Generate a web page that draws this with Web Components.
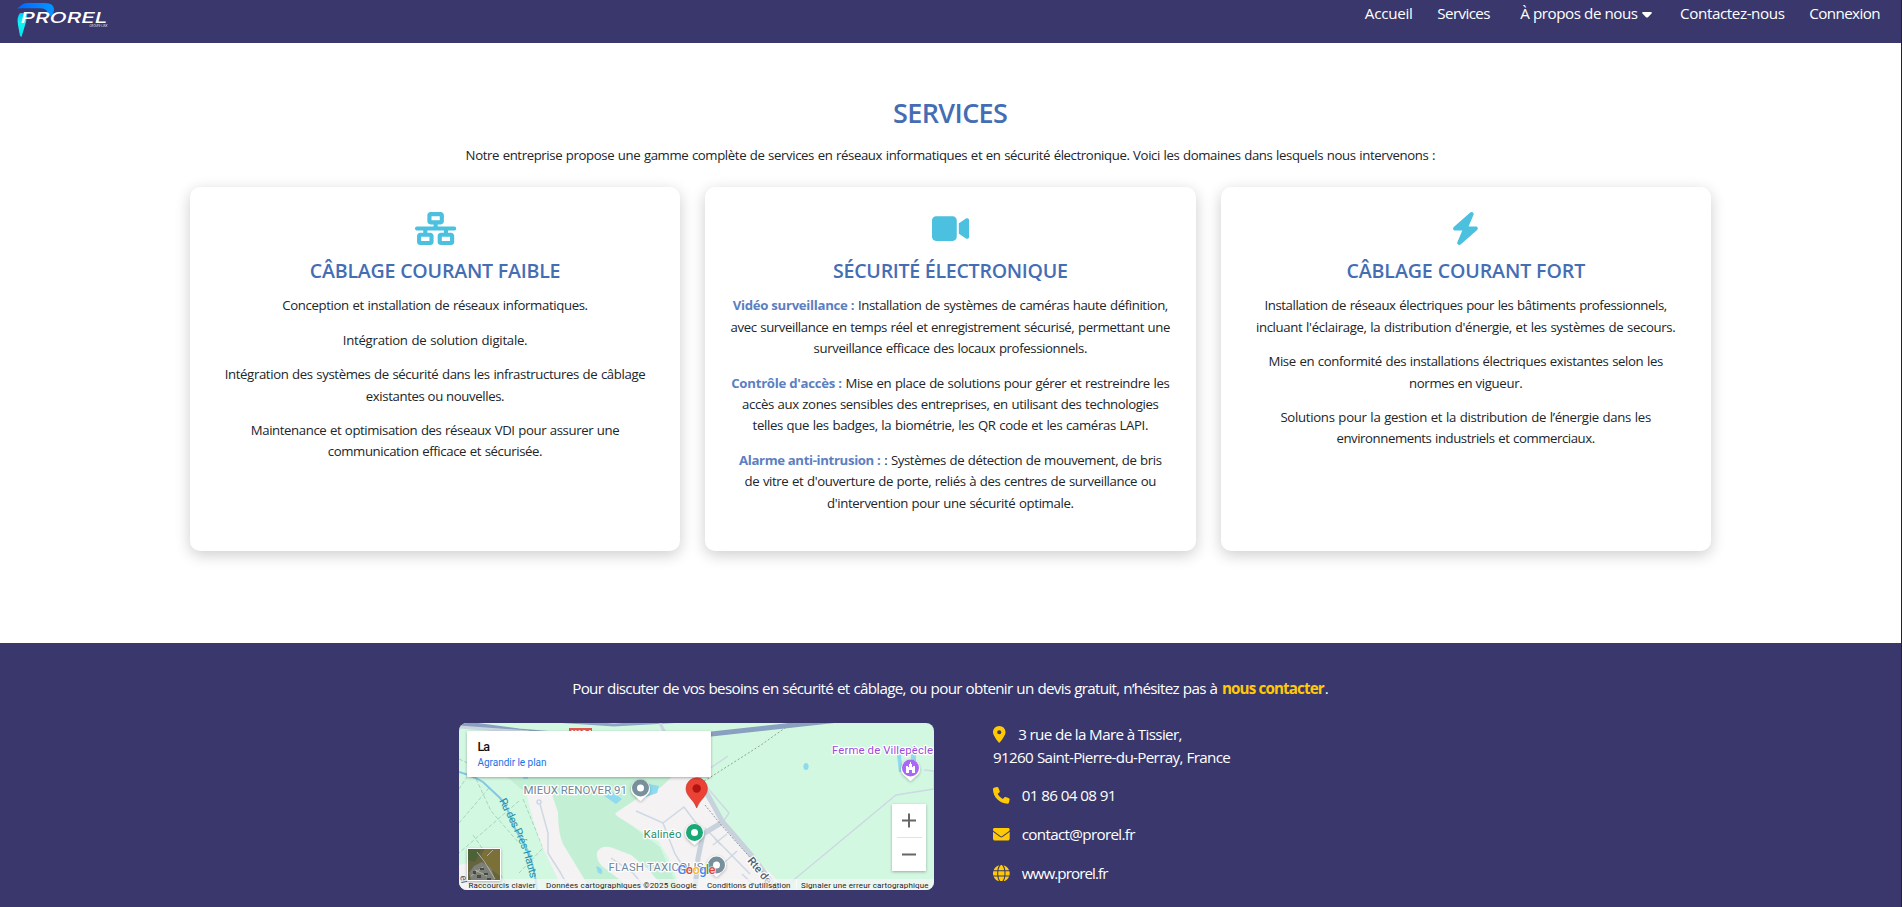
<!DOCTYPE html>
<html lang="fr">
<head>
<meta charset="utf-8">
<title>Prorel - Services</title>
<style>
html,body{margin:0;height:100%;overflow:hidden;background:#fff}
body{box-sizing:border-box;border-right:1px solid #232326;font-family:"Open Sans","Noto Sans",sans-serif;color:#212529}
</style>
</head>
<body>
<prorel-page></prorel-page>
<script>
const ICONS={
network:[640,'M256 64H384v64H256V64zM240 0c-26.5 0-48 21.5-48 48v96c0 26.5 21.5 48 48 48h48v32H32c-17.7 0-32 14.3-32 32s14.3 32 32 32h96v32H80c-26.5 0-48 21.5-48 48v96c0 26.5 21.5 48 48 48H240c26.5 0 48-21.5 48-48V368c0-26.5-21.5-48-48-48H192V288H448v32H400c-26.5 0-48 21.5-48 48v96c0 26.5 21.5 48 48 48H560c26.5 0 48-21.5 48-48V368c0-26.5-21.5-48-48-48H512V288h96c17.7 0 32-14.3 32-32s-14.3-32-32-32H352V192h48c26.5 0 48-21.5 48-48V48c0-26.5-21.5-48-48-48H240zM96 448V384H224v64H96zm320-64H544v64H416V384z'],
video:[576,'M0 128C0 92.7 28.7 64 64 64H320c35.3 0 64 28.7 64 64V384c0 35.3-28.7 64-64 64H64c-35.3 0-64-28.7-64-64V128zM559.1 99.8c10.4 5.6 16.9 16.4 16.9 28.2V384c0 11.8-6.5 22.6-16.9 28.2s-23 5-32.9-1.6l-96-64L416 337.1V320 192 174.9l14.2-9.5 96-64c9.8-6.5 22.4-7.2 32.9-1.6z'],
bolt:[448,'M349.4 44.6c5.9-13.7 1.5-29.7-10.6-38.5s-28.6-8-39.9 1.8l-256 224c-10 8.8-13.6 22.9-8.9 35.3S50.7 288 64 288H175.5L98.6 467.4c-5.9 13.7-1.5 29.7 10.6 38.5s28.6 8 39.9-1.8l256-224c10-8.8 13.6-22.9 8.9-35.3s-16.6-20.7-30-20.7H272.5L349.4 44.6z'],
pin:[384,'M215.7 499.2C267 435 384 279.4 384 192C384 86 298 0 192 0S0 86 0 192c0 87.4 117 243 168.3 307.2c12.3 15.3 35.1 15.3 47.4 0zM192 128a64 64 0 1 1 0 128 64 64 0 1 1 0-128z'],
phone:[512,'M164.9 24.6c-7.7-18.6-28-28.5-47.4-23.2l-88 24C12.1 30.2 0 46 0 64C0 311.4 200.6 512 448 512c18 0 33.8-12.1 38.6-29.5l24-88c5.3-19.4-4.6-39.7-23.2-47.4l-96-40c-16.3-6.8-35.2-2.1-46.3 11.6L304.7 368C234.3 334.7 177.3 277.7 144 207.3L193.3 167c13.7-11.2 18.4-30 11.6-46.3l-40-96z'],
mail:[512,'M48 64C21.5 64 0 85.5 0 112c0 15.1 7.1 29.3 19.2 38.4L236.8 313.6c11.4 8.5 27 8.5 38.4 0L492.8 150.4c12.1-9.1 19.2-23.3 19.2-38.4c0-26.5-21.5-48-48-48H48zM0 176V384c0 35.3 28.7 64 64 64H448c35.3 0 64-28.7 64-64V176L294.4 339.2c-22.8 17.1-54 17.1-76.8 0L0 176z'],
globe:[512,'M352 256c0 22.2-1.2 43.6-3.3 64H163.3c-2.2-20.4-3.3-41.8-3.3-64s1.2-43.6 3.3-64H348.7c2.2 20.4 3.3 41.8 3.3 64zm28.8-64H503.9c5.3 20.5 8.1 41.9 8.1 64s-2.8 43.5-8.1 64H380.8c2.1-20.6 3.2-42 3.2-64s-1.1-43.4-3.2-64zm112.6-32H376.7c-10-63.9-29.8-117.4-55.3-151.6c78.3 20.7 142 77.5 171.9 151.6zm-149.1 0H167.7c6.1-36.4 15.5-68.6 27-94.7c10.5-23.6 22.2-40.7 33.5-51.5C239.4 3.2 248.7 0 256 0s16.6 3.2 27.8 13.8c11.3 10.8 23 27.9 33.5 51.5c11.6 26 20.9 58.2 27 94.7zm-209 0H18.6C48.6 85.9 112.2 29.1 190.6 8.4C165.1 42.6 145.3 96.1 135.3 160zM8.1 192H131.2c-2.1 20.6-3.2 42-3.2 64s1.1 43.4 3.2 64H8.1C2.8 299.5 0 278.1 0 256s2.8-43.5 8.1-64zM194.7 446.6c-11.6-26-20.9-58.2-27-94.6H344.3c-6.1 36.4-15.5 68.6-27 94.6c-10.5 23.6-22.2 40.7-33.5 51.5C272.6 508.8 263.3 512 256 512s-16.6-3.2-27.8-13.8c-11.3-10.8-23-27.9-33.5-51.5zM135.3 352c10 63.9 29.8 117.4 55.3 151.6C112.2 482.9 48.6 426.1 18.6 352H135.3zm358.1 0c-30 74.1-93.6 130.9-171.9 151.6c25.5-34.2 45.2-87.7 55.3-151.6H493.4z']
};
class Base extends HTMLElement{
  constructor(){super();this.attachShadow({mode:'open'})}
  connectedCallback(){this.shadowRoot.innerHTML=this.render()}
}
const define=(n,render)=>customElements.define(n,class extends Base{render(){return render(this)}});

define('fa-icon',e=>{const [w,d]=ICONS[e.getAttribute('name')];const s=+e.getAttribute('size');
return `<style>:host{display:inline-block;flex:none}svg{display:block;fill:currentColor}</style>
<svg width="${s*w/512}" height="${s}" viewBox="0 0 ${w} 512"><path d="${d}"/></svg>`});

define('prorel-logo',()=>`<style>:host{display:block;width:120px;height:43px}svg{display:block}text{font-family:"Inter","Open Sans",sans-serif;fill:#fff}</style>
<svg width="120" height="43" viewBox="0 0 120 43"><defs><linearGradient id="b"><stop offset="0" stop-color="#0066ff"/><stop offset="1" stop-color="#0795ff"/></linearGradient><linearGradient id="c" x1="0" y1="0" x2="0" y2="1"><stop offset="0" stop-color="#00c6ff"/><stop offset=".4" stop-color="#0ff3f6"/><stop offset="1" stop-color="#05e5ec"/></linearGradient></defs>
<path d="M17 8.5 23 4Q25 3 28 3H45Q53.500 3 54 9Q54 13.500 50.500 16.500L47.500 12Q46 8.500 40 8.300H22Z" fill="url(#b)"/>
<path d="M18 25Q16.500 17 20 13H27.500L26 22 21.500 37 20 36Z" fill="url(#c)"/>
<text x="20.500" y="22.700" font-size="15.200" font-weight="500" font-style="italic" textLength="87" lengthAdjust="spacingAndGlyphs">PROREL</text>
<text x="89.500" y="27" font-size="3.600" font-style="italic" textLength="18" lengthAdjust="spacingAndGlyphs" opacity=".85">GROUPE-LINK</text></svg>`);

define('site-header',()=>`<style>:host{display:flex;justify-content:space-between;height:43px;background:#39376b;color:#fff;font-size:15.200px;line-height:24px}
nav{display:flex;align-items:flex-start;padding:1px 20.500px 0 0}a{display:block;color:inherit;white-space:nowrap}.a{margin-right:24.300px}.s{margin-right:29.800px}a.d{display:flex;align-items:center;margin-right:28.500px}i{margin:3px 0 0 3.500px;width:10px;height:6px}svg{display:block}
</style><prorel-logo></prorel-logo>
<nav><a class="a"><fit-text w="47.300">Accueil</fit-text></a><a class="s"><fit-text w="52.500">Services</fit-text></a><a class="d"><fit-text w="117">À propos de nous</fit-text><i><svg width="10" height="6"><path d="M1 0H9Q10.300 .3 9.500 1.400L6 5.200Q5 6 4 5.200L.5 1.400Q-.3.3 1 0Z" fill="#fff"/></svg></i></a><a class="a"><fit-text w="104">Contactez-nous</fit-text></a><a><fit-text w="70.500">Connexion</fit-text></a></nav>`);

define('service-card',e=>`<style>:host{display:block;box-sizing:border-box;height:364px;padding-top:25px;border-radius:10px;background:#fff;box-shadow:0 4px 15px rgba(0,0,0,.2);text-align:center}
fa-icon{display:flex;justify-content:center;height:33px;color:#4bc0df}
h3{margin:11px 0 9.300px;font-size:19.600px;line-height:30px;font-weight:600;color:#456db4}</style>
<fa-icon name="${e.getAttribute('icon')}" size="33"></fa-icon><h3><fit-text w="${e.getAttribute('hw')}">${e.getAttribute('heading')}</fit-text></h3><slot></slot>`);

define('services-section',()=>`<style>:host{display:block;box-sizing:border-box;height:600px;padding-top:50px;text-align:center}
h2{margin:0;font-size:27px;line-height:40px;font-weight:600;color:#456db4}
.intro{margin:10px 0 20px;font-size:13.200px;line-height:24px}
.grid{display:grid;grid-template-columns:repeat(3,1fr);gap:25px;width:1521px;margin:0 auto}
p{margin:0 0 13px;font-size:13.200px;line-height:21.400px}
p span{display:block;white-space:nowrap}b{color:#5b80c1;font-weight:700}</style>
<h2><fit-text w="114">SERVICES</fit-text></h2>
<p class="intro"><fit-text w="969">Notre entreprise propose une gamme complète de services en réseaux informatiques et en sécurité électronique. Voici les domaines dans lesquels nous intervenons :</fit-text></p>
<div class="grid">
<service-card icon="network" heading="CÂBLAGE COURANT FAIBLE" hw="250">
<p><span><fit-text w="305">Conception et installation de réseaux informatiques.</fit-text></span></p>
<p><span><fit-text w="184">Intégration de solution digitale.</fit-text></span></p>
<p><span><fit-text w="420">Intégration des systèmes de sécurité dans les infrastructures de câblage</fit-text></span><span><fit-text w="138">existantes ou nouvelles.</fit-text></span></p>
<p><span><fit-text w="368">Maintenance et optimisation des réseaux VDI pour assurer une</fit-text></span><span><fit-text w="214">communication efficace et sécurisée.</fit-text></span></p>
</service-card>
<service-card icon="video" heading="SÉCURITÉ ÉLECTRONIQUE" hw="234">
<p><span><b><fit-text w="121">Vidéo surveillance :</fit-text></b> <fit-text w="309.500">Installation de systèmes de caméras haute définition,</fit-text></span><span><fit-text w="439">avec surveillance en temps réel et enregistrement sécurisé, permettant une</fit-text></span><span><fit-text w="273">surveillance efficace des locaux professionnels.</fit-text></span></p>
<p><span><b><fit-text w="110">Contrôle d'accès :</fit-text></b> <fit-text w="323.500">Mise en place de solutions pour gérer et restreindre les</fit-text></span><span><fit-text w="416">accès aux zones sensibles des entreprises, en utilisant des technologies</fit-text></span><span><fit-text w="395">telles que les badges, la biométrie, les QR code et les caméras LAPI.</fit-text></span></p>
<p><span><b><fit-text w="141">Alarme anti-intrusion :</fit-text></b> <fit-text w="277">: Systèmes de détection de mouvement, de bris</fit-text></span><span><fit-text w="411">de vitre et d'ouverture de porte, reliés à des centres de surveillance ou</fit-text></span><span><fit-text w="246">d'intervention pour une sécurité optimale.</fit-text></span></p>
</service-card>
<service-card icon="bolt" heading="CÂBLAGE COURANT FORT" hw="238">
<p><span><fit-text w="402">Installation de réseaux électriques pour les bâtiments professionnels,</fit-text></span><span><fit-text w="419">incluant l'éclairage, la distribution d'énergie, et les systèmes de secours.</fit-text></span></p>
<p><span><fit-text w="394">Mise en conformité des installations électriques existantes selon les</fit-text></span><span><fit-text w="113">normes en vigueur.</fit-text></span></p>
<p><span><fit-text w="370">Solutions pour la gestion et la distribution de l’énergie dans les</fit-text></span><span><fit-text w="258">environnements industriels et commerciaux.</fit-text></span></p>
</service-card></div>`);

define('location-map',()=>`<style>:host{display:block;width:475px;height:167px;border-radius:8px;overflow:hidden}svg{display:block}text{font-family:Roboto,sans-serif}.h{paint-order:stroke;stroke:#fff;stroke-width:2.500px;stroke-linejoin:round}</style>
<svg width="475" height="167" viewBox="0 0 475 167"><defs><filter id="s" x="-20%" y="-20%" width="140%" height="150%"><feDropShadow dx="0" dy="1" stdDeviation="1.500" flood-opacity=".3"/></filter></defs>
<rect width="475" height="167" fill="#d3f8e2"/>
<path d="M41 48 69 72 120 167H220L201 124 156 90 175 78 232 48Z" fill="#c3f0d5"/>
<path d="M0 36 13 42M12 48 0 66M60 78 0 130M14 112 52 167M30 65 0 100M64 76 84 125 60 150M12 45 32 88 60 120M84 125 97 118" fill="none" stroke="#a5d5bb" stroke-width="1" stroke-dasharray="4 2"/>
<path d="M0 142 13 139 18 167H0Z" fill="#f4f2f3"/>
<path d="M68 73Q80 61 91 65Q94 75 99 89Q99 110 104 121L132 167H104L84 125Q74 100 68 73Z" fill="#f4f2f3"/>
<path d="M138 129Q143 121 154 125L172 132 188 145 207 167H174L143 143Q137 137 138 129Z" fill="#f4f2f3"/>
<path d="M157 90 176 77 200 66 216 51 235 55 248 77 266 97 291 130 318 157 327 167H222L210 136 200 119 161 95Q155 91 157 90Z" fill="#f4f2f3"/>
<path d="M144 72 152 68 163 76 157 81ZM190 61 200 63 198 70 187 74ZM137 143Q145 145 143 151L139 150ZM64 54h5v2h-5z" fill="#8fdaee"/>
<path d="M0 49Q14 53 24 59L41 75Q49 84 54 102L70 130Q76 148 78 167" fill="none" stroke="#82c9e5" stroke-width="2"/>
<path d="M0 0 60 8 130 14 225 14 380-3" fill="none" stroke="#8aa0c1" stroke-width="5"/><path d="M95-2 155 2 225-2" fill="none" stroke="#8fa5c5" stroke-width="3"/>
<path d="M0 4 70 9M201 0 207 12" fill="none" stroke="#ccd4e0" stroke-width="3"/>
<rect x="110" y="5" width="23" height="11" fill="#e05753"/><text x="112" y="14" font-size="8.500" font-weight="700" fill="#fff">N104</text>
<g fill="none" stroke="#ced8e3" stroke-width="1.500"><circle cx="80" cy="79" r="2"/><path d="M81 81 89 110V130L101 149 111 167M177 88 204 100 225 84 243 108M204 100 216 131 229 151M152 135 174 150 188 167M246 105 291 151M254 122 268 111M256 116 262 122M266 139 278 128M240 55 270 90 264 99M250 46 269 33M324 167 337 155 437 72 475 66V48L465 47M283 151 300 167"/></g>
<path d="M239 54 263 98 294 134 318 167M262 100 244 111 239 135 236 167" fill="none" stroke="#c8d2dc" stroke-width="5"/>
<path d="M230 64 247 57 302 22 333 0" fill="none" stroke="#8ba496" stroke-dasharray="2 2"/><path d="M246 82 263 103 296 140 319 167" fill="none" stroke="#8ba0a0" stroke-dasharray="2 1.500"/>
<ellipse cx="347" cy="43.500" rx="2.600" ry="3.500" fill="#8fdaee"/><path d="M437 24h20v14h-5v-10h-8l-2 5 2 16h-4Z" fill="#8fdaee"/>
<text class="h" x="64.500" y="70.500" font-size="11.500" fill="#71869a" textLength="103.500">MIEUX RENOVER 91</text>
<text class="h" x="184.500" y="115" font-size="11.500" fill="#21906d" textLength="38">Kalinéo</text>
<text class="h" x="149.500" y="148" font-size="11.500" fill="#71869a" textLength="95">FLASH TAXICOLIS</text>
<text class="h" x="373" y="31" font-size="11.500" fill="#9b4bdb" textLength="101">Ferme de Villepècle</text>
<path id="rv" d="M40 78Q50 96 61 121Q69 142 73 165" fill="none"/><text font-size="11" fill="#2491a8"><textPath href="#rv" textLength="84">Ru des Prés-Hauts</textPath></text>
<text class="h" font-size="11" font-weight="500" fill="#505f70" transform="translate(288 138) rotate(50)">Rte de la</text>
<text font-size="10" fill="#505f70" transform="translate(1 153) rotate(80)">el</text>
<g filter="url(#s)"><path d="M172 66a9.500 9.500 0 1 1 19 0q0 4-4 7l-5.500 5-5.500-5q-4-3-4-7ZM226 110a9.500 9.500 0 1 1 19 0q0 4-4 7l-5.500 5-5.500-5q-4-3-4-7ZM248 142a9.500 9.500 0 1 1 19 0q0 4-4 7l-5.500 5-5.500-5q-4-3-4-7ZM442 46a9.500 9.500 0 1 1 19 0q0 4-4 7l-5.500 5-5.500-5q-4-3-4-7Z" fill="#fff"/></g>
<circle cx="181.500" cy="65" r="8.500" fill="#78909c"/><circle cx="235.500" cy="109.500" r="8.500" fill="#18a974"/><circle cx="257.500" cy="142" r="8.500" fill="#78909c"/><circle cx="451.500" cy="45" r="8.500" fill="#aa67f5"/><g fill="#fff"><circle cx="181.500" cy="65" r="3.500"/><circle cx="235.500" cy="109.500" r="3.500"/><circle cx="257.500" cy="142" r="3.500"/><path d="M447 43h2v1h1v-3h1v-2h1v2h1v3h1v-1h2v7h-3v-3h-3v3h-3Z"/></g>
<path d="M227 65.500a10.700 10.700 0 0 1 21.400 0c0 8-7.500 10.500-10.700 19.500-3.200-9-10.700-11.500-10.700-19.500Z" fill="#ea4335" stroke="#c5352b" stroke-width=".6"/><circle cx="237.700" cy="65.500" r="4.200" fill="#b31412"/>
<text x="218.500" y="151" font-size="13" font-weight="500" textLength="38" style="paint-order:stroke;stroke:#fff;stroke-width:1px"><tspan fill="#4285f4">G</tspan><tspan fill="#ea4335">o</tspan><tspan fill="#fbbc04">o</tspan><tspan fill="#4285f4">g</tspan><tspan fill="#34a853">l</tspan><tspan fill="#ea4335">e</tspan></text>
<rect x="8" y="8" width="244" height="46" rx="1" fill="#fff" filter="url(#s)"/>
<text x="18.500" y="28" font-size="12.500" font-weight="500" fill="#111" textLength="12.500">La</text><text x="18.500" y="43" font-size="10" fill="#1a73e8" textLength="69">Agrandir le plan</text>
<g filter="url(#s)"><rect x="433" y="81" width="34" height="67" fill="#fff"/></g><path d="M438 114.500h25" stroke="#e2e2e2"/><path d="M443 97.500h14M450 90.500v14M443 131.500h14" stroke="#666" stroke-width="2"/>
<rect x="80" y="156" width="395" height="11" fill="#f5f5f5" opacity=".72"/><rect x="8" y="156" width="73" height="11" fill="#f5f5f5" opacity=".72"/>
<g filter="url(#s)"><rect x="8" y="125" width="34" height="33" rx="2" fill="#fff"/></g><rect x="9" y="126" width="32" height="31" fill="#65643f"/><path d="M26 126h15v27l-11-8-8-13Z" fill="#7a7038"/><path d="M9 126 22 127 16 139 9 137Z" fill="#4c6136"/><path d="M10 150 15 143 23 139 32 145 36 157H12Z" fill="#7d8079"/><path d="M18 129 25 138 36 156M12 153 24 144M28 133 34 127M16 147 28 153" stroke="#b5b0a0" fill="none"/><path d="M14 148h3v3h-3zM21 145h4v2h-4zM25 150h4v2h-4zM18 152h4v3h-4zM28 155h4v2h-4z" fill="#454b43"/>
<g font-size="8" fill="#222"><text x="9.500" y="164.500" textLength="67">Raccourcis clavier</text><text x="87" y="164.500" textLength="150.500">Données cartographiques ©2025 Google</text><text x="248" y="164.500" textLength="83.500">Conditions d'utilisation</text><text x="342" y="164.500" textLength="127.500">Signaler une erreur cartographique</text></g><path d="M337.500 156v11" stroke="#fff" opacity=".6"/>
</svg>`);

define('contact-row',e=>`<style>:host{display:block;height:22.300px}div{display:flex;align-items:center;height:22.300px}fa-icon{color:#ffca05;margin-right:${e.getAttribute('gap')}px}</style><div><fa-icon name="${e.getAttribute('icon')}" size="16.700"></fa-icon><slot></slot></div>`);

define('site-footer',()=>`<style>:host{display:block;height:264px;background:#39376b;color:#fff;font-size:15.200px;box-sizing:border-box;padding-top:33px}
.cta{line-height:24px;text-align:center;margin:0 0 23px;white-space:nowrap}b{color:#ffc907;font-weight:700}
.row{display:flex;gap:59px;margin-left:459px}.info{line-height:22.300px;padding-top:.4px}.line{height:22.300px;white-space:nowrap}
contact-row{margin-bottom:16.400px}.first{margin-bottom:0}.line{margin-bottom:16.400px}</style>
<p class="cta"><fit-text w="645">Pour discuter de vos besoins en sécurité et câblage, ou pour obtenir un devis gratuit, n’hésitez pas à</fit-text> <b><fit-text w="102">nous contacter</fit-text></b>.</p>
<div class="row"><location-map></location-map><div class="info">
<contact-row class="first" icon="pin" gap="12.700"><fit-text w="163.500">3 rue de la Mare à Tissier,</fit-text></contact-row>
<div class="line"><fit-text w="237">91260 Saint-Pierre-du-Perray, France</fit-text></div>
<contact-row icon="phone" gap="12"><fit-text w="94">01 86 04 08 91</fit-text></contact-row>
<contact-row icon="mail" gap="12"><fit-text w="113">contact@prorel.fr</fit-text></contact-row>
<contact-row icon="globe" gap="12"><fit-text w="86">www.prorel.fr</fit-text></contact-row>
</div></div>`);

define('prorel-page',()=>`<style>:host{display:block}</style><site-header></site-header><services-section></services-section><site-footer></site-footer>`);

/* Tracks a line of text so that it spans the width given in the w attribute; word gaps take part of the difference. */
customElements.define('fit-text',class extends Base{
  render(){return '<style>:host{display:inline-block;white-space:nowrap}span{display:inline-block}</style><span><slot></slot></span>'}
  connectedCallback(){super.connectedCallback();const s=this.shadowRoot.querySelector('span');
    if(this.textContent.length>30)s.style.wordSpacing='.6px';
    const ls=(+this.getAttribute('w')+.8-s.getBoundingClientRect().width)/(this.textContent.length-1);
    s.style.letterSpacing=ls+'px';s.style.marginRight=-ls+'px'}
});
</script>
</body>
</html>
